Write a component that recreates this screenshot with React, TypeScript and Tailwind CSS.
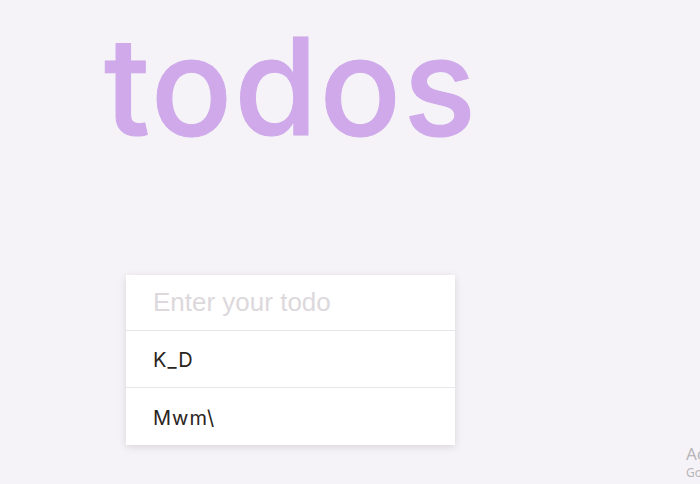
import { useState } from 'react';

const TODOS = ['K_D', 'Mwm\\'];

export default function App() {
  const [value, setValue] = useState('');

  return (
    <div className="relative h-[484px] w-[700px] overflow-hidden bg-[#f5f3f7]">
      {/* Title */}
      <h1
        className="ml-[104px] pt-[6px] text-[135px] leading-[160px] font-medium tracking-[2px] text-[#cfa9ea] [-webkit-text-stroke:1px_#cfa9ea]"
        style={{ fontFamily: 'Inter, "Noto Sans", sans-serif' }}
      >
        todos
      </h1>

      {/* Todo card */}
      <div className="mt-[109px] ml-[126px] w-[329px] bg-white shadow-[0_2px_8px_rgba(0,0,0,0.12)]">
        <input
          value={value}
          onChange={e => setValue(e.target.value)}
          placeholder="Enter your todo"
          className="block h-[56px] w-full border-b border-[#e8e6ea] px-[27px] text-[26px] text-[#333] outline-none placeholder:text-[#dcd8dc]"
          style={{ fontFamily: '"Liberation Sans", Arial, sans-serif' }}
        />
        {TODOS.map((todo, i) => (
          <div
            key={todo}
            className={`flex h-[57px] items-center px-[27px] pt-[2px] text-[20px] tracking-[1px] text-[#2a2420] ${i < TODOS.length - 1 ? 'border-b border-[#e8e6ea]' : ''}`}
            style={{ fontFamily: 'Inter, sans-serif' }}
          >
            {todo}
          </div>
        ))}
      </div>

      {/* Windows activation watermark */}
      <div
        className="pointer-events-none absolute top-[443px] right-[-100px] w-[114px] overflow-hidden text-[#b8b6ba]"
        style={{ fontFamily: '"Noto Sans", sans-serif' }}
      >
        <div className="text-[17px] leading-[22px] whitespace-nowrap">Activate Windows</div>
        <div className="text-[12px] leading-[16px] whitespace-nowrap">Go to Settings</div>
      </div>
    </div>
  );
}
